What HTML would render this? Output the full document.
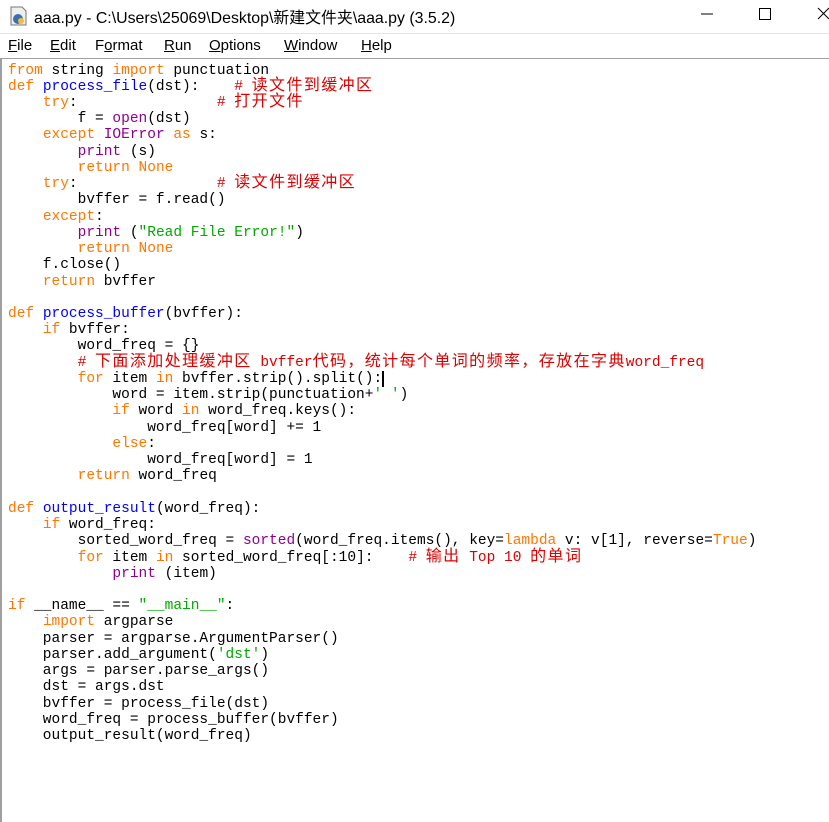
<!DOCTYPE html>
<html><head><meta charset="utf-8"><style>
html,body{margin:0;padding:0;width:829px;height:822px;overflow:hidden;background:#fff}
.title{position:absolute;left:0;top:0;width:829px;height:33px;border-bottom:1px solid #e5e5e5;font-family:"Liberation Sans","Noto Sans CJK SC",sans-serif;font-size:15.9px;color:#000}
.title .t{position:absolute;left:34px;top:5px}
.menu{position:absolute;left:0;top:34px;width:829px;height:24px;border-bottom:1px solid #a0a0a0;font-family:"Liberation Sans",sans-serif;font-size:15px}
.menu span{position:absolute;top:3px}
.ed{position:absolute;left:0;top:59px;width:827px;height:763px;border-left:2px solid #a0a0a0}
pre{margin:0;position:absolute;left:6px;top:3.5px;font-family:"Liberation Mono","Noto Sans CJK SC",monospace;font-size:14.5px;line-height:16.24px;color:#000}
.k{color:#ff7700}.f{color:#0000ff}.b{color:#900090}.s{color:#00aa00}.c{color:#dd0000}
.z{font-family:"Noto Sans CJK SC",sans-serif;font-size:16px;letter-spacing:1.4px;line-height:0}
</style></head><body>
<div class="title">
<svg style="position:absolute;left:10px;top:6px" width="18" height="20"><path d="M1 1h11l4 4v14H1z" fill="#eee" stroke="#777"/><circle cx="8" cy="13" r="5" fill="#3a70b0"/><circle cx="11" cy="15" r="3" fill="#f0c030"/></svg>
<span class="t">aaa.py - C:\Users\25069\Desktop\新建文件夹\aaa.py (3.5.2)</span>
<svg style="position:absolute;left:700px;top:7px" width="129" height="16"><path d="M1 7h12" stroke="#000"/><rect x="59.5" y="1.5" width="11" height="11" fill="none" stroke="#000"/><path d="M118 1l11 11M129 1l-11 11" stroke="#000"/></svg>
</div>
<div class="menu">
<span style="left:8px"><u>F</u>ile</span><span style="left:50px"><u>E</u>dit</span><span style="left:95px">F<u>o</u>rmat</span><span style="left:164px"><u>R</u>un</span><span style="left:209px"><u>O</u>ptions</span><span style="left:284px"><u>W</u>indow</span><span style="left:361px"><u>H</u>elp</span>
</div>
<div class="ed"><pre><span class="k">from</span> string <span class="k">import</span> punctuation
<span class="k">def</span> <span class="f">process_file</span>(dst):    <span class="c"># <span class="z">读文件到缓冲区</span></span>
    <span class="k">try</span>:                <span class="c"># <span class="z">打开文件</span></span>
        f = <span class="b">open</span>(dst)
    <span class="k">except</span> <span class="b">IOError</span> <span class="k">as</span> s:
        <span class="b">print</span> (s)
        <span class="k">return</span> <span class="k">None</span>
    <span class="k">try</span>:                <span class="c"># <span class="z">读文件到缓冲区</span></span>
        bvffer = f.read()
    <span class="k">except</span>:
        <span class="b">print</span> (<span class="s">"Read File Error!"</span>)
        <span class="k">return</span> <span class="k">None</span>
    f.close()
    <span class="k">return</span> bvffer

<span class="k">def</span> <span class="f">process_buffer</span>(bvffer):
    <span class="k">if</span> bvffer:
        word_freq = {}
        <span class="c"># <span class="z">下面添加处理缓冲区</span> bvffer<span class="z">代码，统计每个单词的频率，存放在字典</span>word_freq</span>
        <span class="k">for</span> item <span class="k">in</span> bvffer.strip().split():<span style="border-left:2px solid #000"></span>
            word = item.strip(punctuation+<span class="s">' '</span>)
            <span class="k">if</span> word <span class="k">in</span> word_freq.keys():
                word_freq[word] += 1
            <span class="k">else</span>:
                word_freq[word] = 1
        <span class="k">return</span> word_freq

<span class="k">def</span> <span class="f">output_result</span>(word_freq):
    <span class="k">if</span> word_freq:
        sorted_word_freq = <span class="b">sorted</span>(word_freq.items(), key=<span class="k">lambda</span> v: v[1], reverse=<span class="k">True</span>)
        <span class="k">for</span> item <span class="k">in</span> sorted_word_freq[:10]:    <span class="c"># <span class="z">输出</span> Top 10 <span class="z">的单词</span></span>
            <span class="b">print</span> (item)

<span class="k">if</span> __name__ == <span class="s">"__main__"</span>:
    <span class="k">import</span> argparse
    parser = argparse.ArgumentParser()
    parser.add_argument(<span class="s">'dst'</span>)
    args = parser.parse_args()
    dst = args.dst
    bvffer = process_file(dst)
    word_freq = process_buffer(bvffer)
    output_result(word_freq)
</pre></div>
</body></html>
